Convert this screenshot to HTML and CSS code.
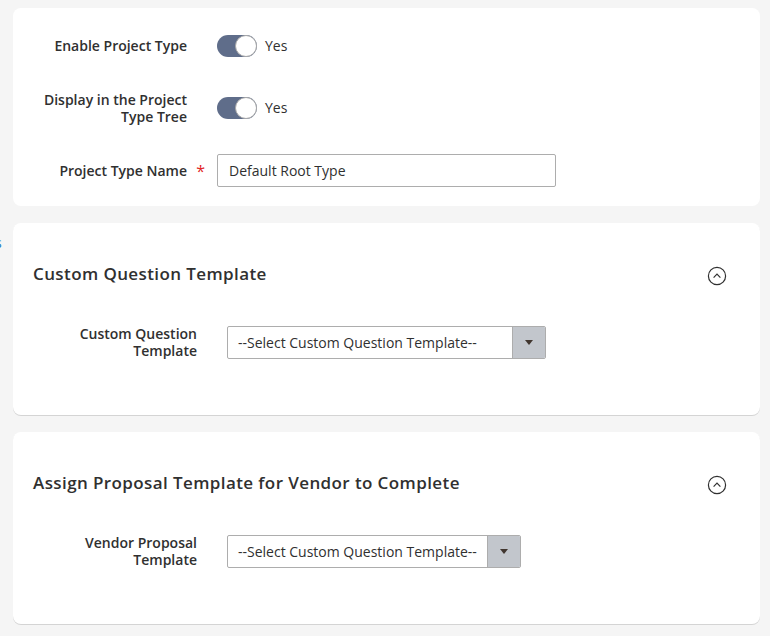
FILE: index.html
```html
<!DOCTYPE html>
<html>
<head>
<meta charset="utf-8">
<link rel="stylesheet" href="styles.css">
</head>
<body>
<span class="edge-link">s</span>
<div class="page">
  <section class="card card-main">
    <div class="row">
      <div class="label">Enable Project Type</div>
      <div class="control">
        <span class="toggle"><span class="knob"></span></span>
        <span class="toggle-text">Yes</span>
      </div>
    </div>
    <div class="row">
      <div class="label">Display in the Project Type Tree</div>
      <div class="control">
        <span class="toggle"><span class="knob"></span></span>
        <span class="toggle-text">Yes</span>
      </div>
    </div>
    <div class="row">
      <div class="label required">Project Type Name</div>
      <div class="control">
        <div class="input">Default Root Type</div>
      </div>
    </div>
  </section>

  <section class="card card-section">
    <div class="section-head">
      <h2 class="section-title">Custom Question Template</h2>
      <svg class="collapse-icon" width="20" height="20" viewBox="0 0 20 20">
        <circle cx="10" cy="10" r="8.6" fill="none" stroke="#303030" stroke-width="1.2"/>
        <path d="M6.6 11.6 L10 8.2 L13.4 11.6" fill="none" stroke="#303030" stroke-width="1.2"/>
      </svg>
    </div>
    <div class="row row-sub">
      <div class="label">Custom Question Template</div>
      <div class="control">
        <div class="select select-wide">
          <span class="select-text">--Select Custom Question Template--</span>
          <span class="select-btn"><span class="arrow"></span></span>
        </div>
      </div>
    </div>
  </section>

  <section class="card card-section">
    <div class="section-head">
      <h2 class="section-title">Assign Proposal Template for Vendor to Complete</h2>
      <svg class="collapse-icon" width="20" height="20" viewBox="0 0 20 20">
        <circle cx="10" cy="10" r="8.6" fill="none" stroke="#303030" stroke-width="1.2"/>
        <path d="M6.6 11.6 L10 8.2 L13.4 11.6" fill="none" stroke="#303030" stroke-width="1.2"/>
      </svg>
    </div>
    <div class="row row-sub">
      <div class="label">Vendor Proposal Template</div>
      <div class="control">
        <div class="select select-narrow">
          <span class="select-text">--Select Custom Question Template--</span>
          <span class="select-btn"><span class="arrow"></span></span>
        </div>
      </div>
    </div>
  </section>
</div>
</body>
</html>
```

FILE: styles.css
```css
* { box-sizing: border-box; }
html, body { margin: 0; padding: 0; }
body {
  background: #f5f5f5;
  font-family: "Open Sans", "Noto Sans", sans-serif;
  color: #303030;
  font-size: 14px;
  width: 770px;
  height: 636px;
  overflow: hidden;
  position: relative;
}
.edge-link {
  position: absolute;
  left: -5px;
  top: 233px;
  color: #1979c3;
  font-size: 14px;
}
.page {
  padding: 8px 10px 0 13px;
  display: flex;
  flex-direction: column;
  gap: 17px;
}
.card {
  background: #fff;
  border-radius: 8px;
}
.card-main {
  padding: 21px 0 19px;
  display: flex;
  flex-direction: column;
  gap: 29px;
}
.card-section {
  padding: 39px 33px 56px 20px;
  box-shadow: 0 1px 0 #d4d4d4;
}
.row {
  display: flex;
  align-items: center;
  min-height: 33px;
}
.label {
  width: 174px;
  padding-left: 24px;
  text-align: right;
  font-weight: 600;
  line-height: 17px;
  flex: none;
  position: relative;
}
.label.required::after {
  content: "*";
  color: #e22626;
  position: absolute;
  right: -18px;
  top: 1px;
  font-size: 16px;
  font-weight: 400;
}
.control {
  margin-left: 30px;
  display: flex;
  align-items: center;
}
.toggle {
  width: 40px;
  height: 22px;
  border-radius: 11px;
  background: #5f6d8a;
  position: relative;
  display: inline-block;
}
.knob {
  position: absolute;
  right: 0;
  top: 0;
  width: 22px;
  height: 22px;
  border-radius: 50%;
  background: #fff;
  border: 1px solid #a8a8a8;
}
.toggle-text {
  margin-left: 8px;
  line-height: 20px;
}
.input {
  width: 339px;
  height: 33px;
  border: 1px solid #adadad;
  border-radius: 2px;
  padding: 0 11px;
  line-height: 31px;
}
.section-head {
  display: flex;
  justify-content: space-between;
  align-items: center;
  padding-left: 0;
  height: 24px;
}
.section-title {
  margin: 0;
  font-size: 17px;
  font-weight: 600;
  letter-spacing: 0.4px;
  line-height: 24px;
}
.collapse-icon {
  margin-top: 4px;
  display: block;
}
.row-sub {
  margin-top: 39px;
  margin-left: -20px;
}
.row-sub .label {
  width: 184px;
  padding-left: 34px;
}
.select {
  display: flex;
  height: 33px;
  border: 1px solid #adadad;
  border-radius: 2px;
  overflow: hidden;
}
.select-wide { width: 319px; }
.select-narrow { width: 294px; }
.select-text {
  flex: 1;
  padding: 0 10px;
  line-height: 31px;
  white-space: nowrap;
}
.select-btn {
  width: 33px;
  flex: none;
  background: #c2c6cc;
  border-left: 1px solid #adadad;
  display: flex;
  align-items: center;
  justify-content: center;
}
.arrow {
  width: 0;
  height: 0;
  border-left: 4px solid transparent;
  border-right: 4px solid transparent;
  border-top: 5px solid #41362f;
}
```
